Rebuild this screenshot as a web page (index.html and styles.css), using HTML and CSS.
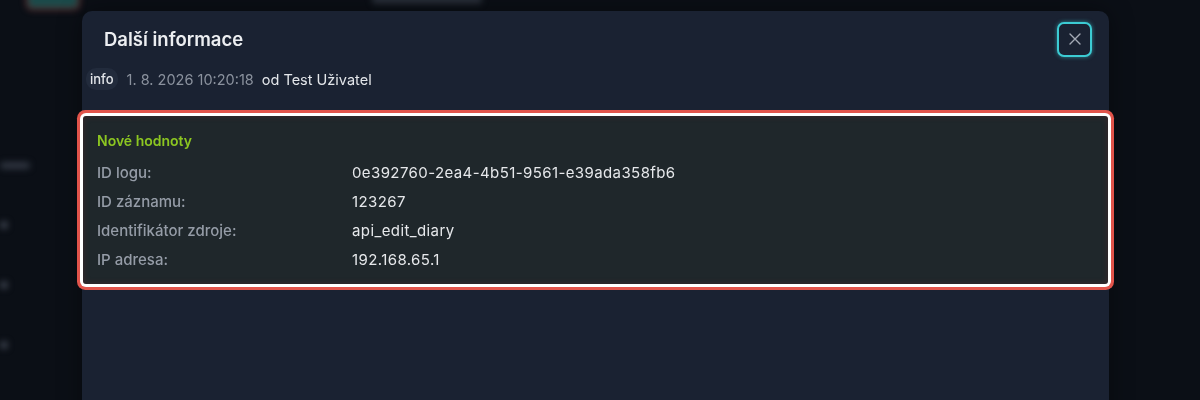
FILE: index.html
```html
<!DOCTYPE html>
<html lang="cs">
<head>
<meta charset="utf-8">
<title>Další informace</title>
<link rel="stylesheet" href="styles.css">
</head>
<body>
<div class="app" aria-hidden="true">
  <aside class="sidebar">
    <div class="side-top"></div>
    <div class="side-nav">
      <span class="side-blob side-blob-wide"></span>
      <span class="side-blob"></span>
      <span class="side-blob"></span>
      <span class="side-blob"></span>
    </div>
  </aside>
  <main class="page">
    <div class="page-title"></div>
  </main>
</div>

<div class="overlay">
  <section class="modal" role="dialog" aria-labelledby="modal-title">
    <header class="modal-header">
      <h1 id="modal-title" class="modal-title">Další informace</h1>
      <button class="close-btn" type="button" aria-label="Zavřít">
        <svg width="14" height="14" viewBox="0 0 14 14" aria-hidden="true">
          <path d="M2 2 L12 12 M12 2 L2 12" stroke="currentColor" stroke-width="1.4" stroke-linecap="round" fill="none"/>
        </svg>
      </button>
    </header>
    <div class="meta">
      <span class="badge">info</span>
      <span class="meta-date">1. 8. 2026 10:20:18</span>
      <span class="meta-user">od Test Uživatel</span>
    </div>
    <div class="values">
      <h3 class="values-title">Nové hodnoty</h3>
      <dl class="values-grid">
        <dt>ID logu:</dt><dd>0e392760-2ea4-4b51-9561-e39ada358fb6</dd>
        <dt>ID záznamu:</dt><dd>123267</dd>
        <dt>Identifikátor zdroje:</dt><dd>api_edit_diary</dd>
        <dt>IP adresa:</dt><dd>192.168.65.1</dd>
      </dl>
    </div>
  </section>
</div>
</body>
</html>
```

FILE: styles.css
```css
* { box-sizing: border-box; }

html, body {
  margin: 0;
  height: 100%;
}

body {
  background: #0b0f16;
  font-family: Inter, "Noto Sans", "Liberation Sans", sans-serif;
  color: #e6e8eb;
  overflow: hidden;
}

.app {
  display: flex;
  height: 400px;
  filter: blur(3px);
}

.sidebar {
  width: 82px;
  display: flex;
  flex-direction: column;
}

.side-top {
  margin: -12px 0 0 26px;
  width: 54px;
  height: 22px;
  border: 2px solid #7a2a2a;
  border-radius: 6px;
  background: #1b4a4a;
}

.side-nav {
  display: flex;
  flex-direction: column;
  gap: 52px;
  margin-top: 152px;
}

.side-blob {
  display: block;
  width: 8px;
  height: 8px;
  border-radius: 4px;
  background: #3a404b;
}

.side-blob-wide {
  width: 30px;
  height: 7px;
  background: #2f3540;
}

.page {
  flex: 1;
}

.page-title {
  margin: -6px 0 0 290px;
  width: 110px;
  height: 10px;
  border-radius: 4px;
  background: #2a303a;
}

.overlay {
  position: fixed;
  inset: 0;
  padding: 11px 0 0 82px;
  display: flex;
  align-items: flex-start;
}

.modal {
  width: 1027px;
  height: 420px;
  background: #1a2232;
  border-radius: 10px;
  box-shadow: 0 0 24px rgba(0, 0, 0, 0.4);
  padding: 0 1px;
}

.modal-header {
  height: 55px;
  display: flex;
  align-items: center;
  justify-content: space-between;
  padding: 0 16px 0 21px;
}

.modal-title {
  margin: 0;
  font-size: 18.5px;
  font-weight: 600;
  color: #eceef1;
}

.close-btn {
  width: 35px;
  height: 35px;
  border: 2px solid #3ccbd3;
  border-radius: 7px;
  background: #1a2232;
  color: #a4aab5;
  display: flex;
  align-items: center;
  justify-content: center;
  padding: 0;
  box-shadow: 0 0 4px rgba(60, 203, 211, 0.6);
  margin-top: 1px;
}

.meta {
  display: flex;
  align-items: center;
  height: 26px;
  padding-left: 3px;
  font-size: 14.5px;
}

.badge {
  background: #222b3c;
  border-radius: 10px;
  padding: 3px 4px;
  font-size: 13px;
  font-weight: 500;
  color: #e3e6ea;
  margin-right: 9px;
}

.meta-date {
  color: #8b929e;
  margin-right: 8px;
}

.meta-user {
  color: #e3e6ea;
}

.values {
  margin: 24px 0 0 0;
  background: #1f272b;
  border-radius: 3px;
  padding: 15px 14px 14px;
  box-shadow:
    inset 0 0 6px rgba(120, 40, 40, 0.35),
    0 0 0 3px #ffffff,
    0 0 0 6px #e2544b;
}

.values-title {
  margin: 0;
  font-size: 14px;
  line-height: 20px;
  font-weight: 600;
  color: #8cc621;
}

.values-grid {
  margin: 12px 0 0;
  display: grid;
  grid-template-columns: 255px 1fr;
  row-gap: 9px;
  font-size: 15px;
  line-height: 20px;
}

.values-grid dt {
  color: #959ca7;
  font-weight: 500;
}

.values-grid dd {
  margin: 0;
  color: #e6e8eb;
  letter-spacing: 0.4px;
}
```
